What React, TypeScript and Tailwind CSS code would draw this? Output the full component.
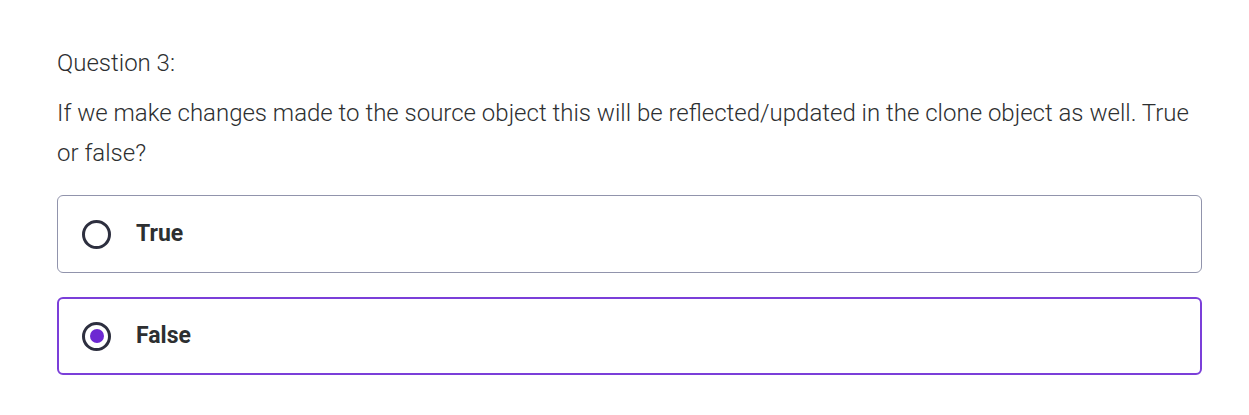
import { useState } from 'react';

const options = ['True', 'False'];

function Radio({ checked }: { checked: boolean }) {
  return (
    <span className="flex h-[29px] w-[29px] shrink-0 items-center justify-center rounded-full border-[3px] border-[#2d2f3f]">
      {checked && <span className="h-[14px] w-[14px] rounded-full bg-[#6d28d2]" />}
    </span>
  );
}

export default function App() {
  const [selected, setSelected] = useState('False');

  return (
    <div
      className="min-h-[415px] bg-white pl-[57px] pr-[47px] pt-[46px] text-[#2d2f31]"
      style={{ fontFamily: 'Roboto, "Liberation Sans", sans-serif' }}
    >
      <div className="text-[24px] font-light leading-[34px]">Question 3:</div>
      <p className="mt-[13px] text-[24px] font-light leading-[40px]">
        If we make changes made to the source object this will be reflected/updated in the clone object as well. True or false?
      </p>
      <div className="mt-[22px] flex flex-col gap-[24px]">
        {options.map((opt) => {
          const checked = selected === opt;
          return (
            <button
              key={opt}
              onClick={() => setSelected(opt)}
              className={`flex h-[78px] items-center gap-[25px] rounded-[6px] bg-white text-left ${
                checked ? 'border-2 border-[#7b3fd9] pl-[23px]' : 'border border-[#9194ac] pl-[24px]'
              }`}
            >
              <Radio checked={checked} />
              <span className="text-[23px] font-bold">{opt}</span>
            </button>
          );
        })}
      </div>
    </div>
  );
}
